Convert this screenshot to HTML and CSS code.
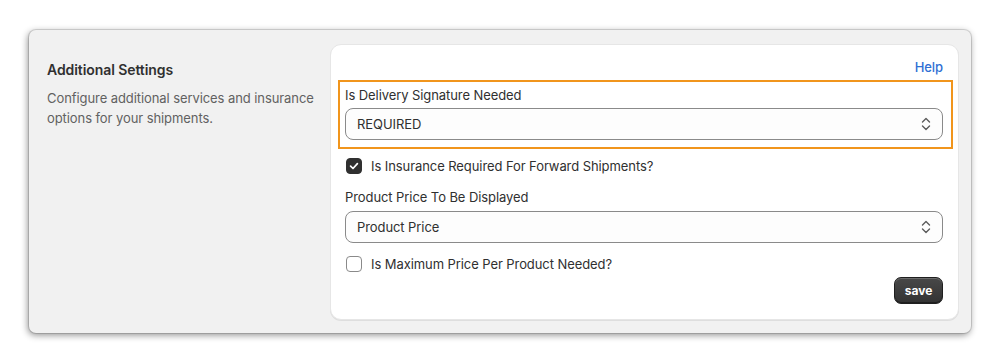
FILE: index.html
```html
<!DOCTYPE html>
<html lang="en">
<head>
<meta charset="utf-8">
<title>Additional Settings</title>
<link rel="stylesheet" href="styles.css">
</head>
<body>
<div class="panel">
  <div class="intro">
    <h2 class="intro-title">Additional Settings</h2>
    <p class="intro-text">Configure additional services and insurance options for your shipments.</p>
  </div>
  <div class="card">
    <div class="help-row"><a class="help" href="#">Help</a></div>
    <div class="highlight">
      <div class="label">Is Delivery Signature Needed</div>
      <div class="select">
        <span class="select-value">REQUIRED</span>
        <svg class="chev" width="10" height="14" viewBox="0 0 10 14"><path d="M1.5 5 L5 1.6 L8.5 5" fill="none" stroke="#5c5c5c" stroke-width="1.4" stroke-linecap="round" stroke-linejoin="round"/><path d="M1.5 9 L5 12.4 L8.5 9" fill="none" stroke="#5c5c5c" stroke-width="1.4" stroke-linecap="round" stroke-linejoin="round"/></svg>
      </div>
    </div>
    <div class="check-row first">
      <span class="box checked"><svg width="12" height="12" viewBox="0 0 12 12"><path d="M2.6 6.2 L5 8.5 L9.4 3.6" fill="none" stroke="#fff" stroke-width="1.7" stroke-linecap="round" stroke-linejoin="round"/></svg></span>
      <span class="check-label">Is Insurance Required For Forward Shipments?</span>
    </div>
    <div class="label second">Product Price To Be Displayed</div>
    <div class="select">
      <span class="select-value">Product Price</span>
      <svg class="chev" width="10" height="14" viewBox="0 0 10 14"><path d="M1.5 5 L5 1.6 L8.5 5" fill="none" stroke="#5c5c5c" stroke-width="1.4" stroke-linecap="round" stroke-linejoin="round"/><path d="M1.5 9 L5 12.4 L8.5 9" fill="none" stroke="#5c5c5c" stroke-width="1.4" stroke-linecap="round" stroke-linejoin="round"/></svg>
    </div>
    <div class="check-row last">
      <span class="box"></span>
      <span class="check-label">Is Maximum Price Per Product Needed?</span>
    </div>
    <div class="actions"><button class="save">save</button></div>
  </div>
</div>
</body>
</html>
```
FILE: styles.css
```css
* { box-sizing: border-box; }
html, body { margin: 0; padding: 0; background: #ffffff; }
body {
  font-family: Inter, "Noto Sans", "Liberation Sans", sans-serif;
  color: #303030;
  font-size: 13px;
  line-height: 20px;
  letter-spacing: -0.08px;
}
.panel {
  margin: 30px 29px 26px 29px;
  background: #f1f1f1;
  border-radius: 7px;
  box-shadow: 0 0 0 1px rgba(0,0,0,0.12), -1px 2px 7px rgba(0,0,0,0.45);
  display: flex;
  padding: 14px 12px 13px 18px;
}
.intro {
  flex: 0 0 283px;
  padding-top: 16px;
  padding-right: 4px;
}
.intro-title {
  margin: 0;
  font-size: 14px;
  line-height: 20px;
  font-weight: 600;
  color: #303030;
}
.intro-text {
  margin: 8px 0 0 0;
  color: #616161;
  font-size: 13px;
  line-height: 20px;
}
.card {
  flex: 1 1 auto;
  background: #ffffff;
  border: 1px solid #e6e6e6;
  border-radius: 11px;
  box-shadow: 0 1px 0 rgba(0,0,0,0.08);
  padding: 12px 15px 15px 14px;
  display: flex;
  flex-direction: column;
}
.help-row { display: flex; justify-content: flex-end; }
.help {
  color: #2f6fd4;
  text-decoration: none;
  font-weight: 500;
  font-size: 13px;
  line-height: 20px;
}
.highlight {
  margin: 3px -10px 0 -7px;
  border: 2px solid #f1951c;
  padding: 3px 8px 7px 5px;
}
.label { line-height: 20px; margin-bottom: 3px; }
.label.second { margin-top: 11px; margin-bottom: 4px; }
.select {
  height: 32px;
  border: 1px solid #8a8a8a;
  border-radius: 8px;
  background: #fdfdfd;
  display: flex;
  align-items: center;
  justify-content: space-between;
  padding: 0 11px 0 11px;
}
.select-value { color: #303030; }
.chev { display: block; }
.check-row {
  display: flex;
  align-items: center;
  gap: 9px;
  height: 20px;
  padding-left: 1px;
}
.check-row.first { margin-top: 7px; }
.check-row.last { margin-top: 11px; }
.box {
  width: 16px;
  height: 16px;
  border-radius: 4px;
  border: 1px solid #8a8a8a;
  background: #fff;
  display: flex;
  align-items: center;
  justify-content: center;
  flex: 0 0 16px;
}
.box.checked { background: #303030; border-color: #303030; }
.check-label { color: #303030; }
.actions { display: flex; justify-content: flex-end; margin-top: 3px; }
.save {
  height: 27px;
  width: 49px;
  border-radius: 7px;
  border: 1px solid #1f1f1f;
  background: linear-gradient(#484848, #333333);
  box-shadow: inset 0 1px 0 rgba(255,255,255,0.2), inset 0 -1px 0 rgba(0,0,0,0.4);
  color: #ffffff;
  font-family: Inter, "Noto Sans", "Liberation Sans", sans-serif;
  font-weight: 700;
  font-size: 12px;
  padding: 0;
}
```
